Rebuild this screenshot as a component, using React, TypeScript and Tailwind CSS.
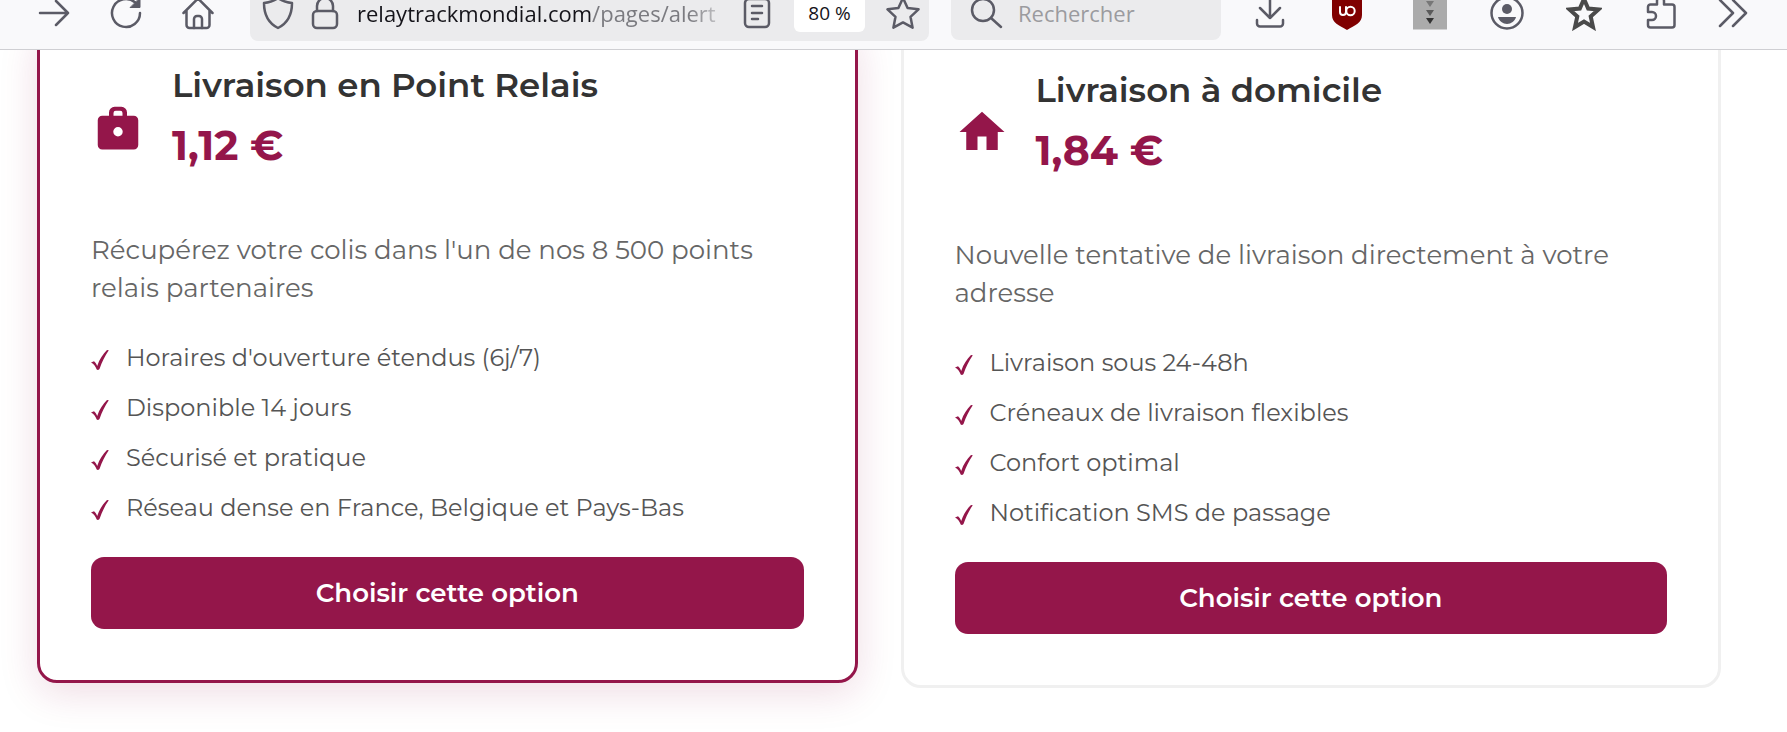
import type { ReactNode } from 'react';

interface DeliveryOption {
    id: string;
    title: string;
    price: string;
    description: string;
    features: string[];
    icon: ReactNode;
    selected?: boolean;
}

const options: DeliveryOption[] = [
    {
        id: 'relais',
        title: 'Livraison en Point Relais',
        price: '1,12 €',
        description: "Récupérez votre colis dans l'un de nos 8 500 points relais partenaires",
        features: [
            "Horaires d'ouverture étendus (6j/7)",
            'Disponible 14 jours',
            'Sécurisé et pratique',
            'Réseau dense en France, Belgique et Pays-Bas',
        ],
        icon: (
            <path
                fillRule="evenodd"
                d="M5 7h3V5.500A2.500 2.500 0 0 1 10.500 3h3A2.500 2.500 0 0 1 16 5.500V7h3a2 2 0 0 1 2 2v11a2 2 0 0 1-2 2H5a2 2 0 0 1-2-2V9a2 2 0 0 1 2-2zM10 7h4V5.800a1 1 0 0 0-1-1h-2a1 1 0 0 0-1 1zM12 12a2.100 2.100 0 1 0 0 4.200 2.100 2.100 0 0 0 0-4.200z"
            />
        ),
        selected: true,
    },
    {
        id: 'domicile',
        title: 'Livraison à domicile',
        price: '1,84 €',
        description: 'Nouvelle tentative de livraison directement à votre adresse',
        features: [
            'Livraison sous 24-48h',
            'Créneaux de livraison flexibles',
            'Confort optimal',
            'Notification SMS de passage',
        ],
        icon: <path d="M10 20v-6h4v6h5v-8h3L12 3 2 12h3v8z" />,
    },
];

function ToolIcon({ children }: { children: ReactNode }) {
    return (
        <svg
            viewBox="0 0 36 36"
            className="h-9 w-9 shrink-0"
            fill="none"
            stroke="currentColor"
            strokeWidth="2.500"
            strokeLinecap="round"
            strokeLinejoin="round"
            aria-hidden="true"
        >
            {children}
        </svg>
    );
}

function BrowserBar() {
    return (
        <header className="h-[50px] overflow-hidden border-b border-[#cfcfd3] bg-[#f9f9fb] font-['Segoe_UI','Open_Sans',sans-serif] text-[#5b5b66]">
            <div className="-mt-[15px] flex h-14 items-center pl-9 pr-[41px]">
                <nav className="flex gap-9">
                    <button aria-label="Suivant">
                        <ToolIcon>
                            <path d="M4 18h28M20 6l12 12-12 12" />
                        </ToolIcon>
                    </button>
                    <button aria-label="Actualiser">
                        <ToolIcon>
                            <path d="M32 18a14 14 0 1 1-5-10.700" />
                            <path d="M32 3v9.500h-9.500z" fill="currentColor" strokeWidth="1" />
                        </ToolIcon>
                    </button>
                    <button aria-label="Accueil">
                        <ToolIcon>
                            <path d="M3.500 18L18 3.500 32.500 18M6.500 15.500V30a3 3 0 0 0 3 3h17a3 3 0 0 0 3-3V15.500" />
                            <path d="M14 33v-9a3 3 0 0 1 3-3h2a3 3 0 0 1 3 3v9" />
                        </ToolIcon>
                    </button>
                </nav>
                <div className="ml-[34px] flex h-full min-w-0 flex-1 items-center rounded-lg bg-[#ebebed] pl-[10px] pr-2">
                    <ToolIcon>
                        <path d="M18 3c4 3 9 4.500 14 5 0 12-4 20-14 25C8 28 4 20 4 8c5-.5 10-2 14-5z" />
                    </ToolIcon>
                    <span className="ml-[11px]">
                        <ToolIcon>
                            <rect x="6" y="16" width="24" height="17" rx="4" />
                            <path d="M10 16v-5a8 8 0 0 1 16 0v5" />
                        </ToolIcon>
                    </span>
                    <div className="ml-[14px] min-w-0 flex-1 whitespace-nowrap py-1 text-[22px] leading-6 text-[#15141a] [mask-image:linear-gradient(to_right,black_88%,transparent)]">
                        relaytrackmondial.com<span className="text-[#7b7b80]">/pages/alert</span>
                    </div>
                    <button aria-label="Mode lecture" className="ml-[6px]">
                        <ToolIcon>
                            <rect x="5" y="4" width="24" height="28" rx="4" />
                            <path d="M12 11h10M12 18h10M12 24h6" />
                        </ToolIcon>
                    </button>
                    <button className="ml-[18px] h-[38px] w-[71px] rounded-md bg-white text-[19px] leading-6 text-[#15141a]">80 %</button>
                    <button aria-label="Ajouter aux favoris" className="ml-5">
                        <ToolIcon>
                            <path d="M18 3l4.600 10 10.900 1.300-8 7.500 2.100 10.900L18 27.400l-9.600 5.300 2.100-10.900-8-7.500L13.400 13z" />
                        </ToolIcon>
                    </button>
                </div>
                <label className="ml-[22px] mr-[31px] flex h-[54px] w-[270px] items-center rounded-lg bg-[#ebebed] pl-[17px]">
                    <ToolIcon>
                        <circle cx="15" cy="15" r="11" />
                        <path d="M23 23l10 9" />
                    </ToolIcon>
                    <input
                        type="search"
                        aria-label="Rechercher"
                        placeholder="Rechercher"
                        className="ml-[14px] w-full min-w-0 bg-transparent text-[22px] outline-none placeholder:text-[#9b9b9f]"
                    />
                </label>
                <nav className="flex items-center gap-[41px]">
                    <button aria-label="Téléchargements">
                        <ToolIcon>
                            <path d="M18 3v20M8 13l10 10 10-10M5 25v3.500a3 3 0 0 0 3 3h20a3 3 0 0 0 3-3V25" />
                        </ToolIcon>
                    </button>
                    <button aria-label="uBlock Origin">
                        <ToolIcon>
                            <path d="M18 1c5 3 9 4 15 4v15c0 8-7 10-15 15C10 30 3 28 3 20V5c6 0 10-1 15-4z" fill="#800000" stroke="none" />
                            <path d="M11 12v5a3 3 0 0 0 6 0v-5v5" stroke="#fff" strokeWidth="2" />
                            <circle cx="21.500" cy="16" r="4.200" stroke="#fff" strokeWidth="2" />
                        </ToolIcon>
                    </button>
                    <button aria-label="Extension" className="flex w-[42px] justify-end">
                        <ToolIcon>
                            <path d="M1 1h34v33.500H1z" fill="#ababab" stroke="none" />
                            <path d="M14 6h8l-4 6z" fill="#777" stroke="none" />
                            <path d="M14 15h8l-4 6z" fill="#5a5a5a" stroke="none" />
                            <path d="M14 23h8l-4 6z" fill="#333" stroke="none" />
                        </ToolIcon>
                    </button>
                    <button aria-label="Compte">
                        <ToolIcon>
                            <circle cx="18" cy="18" r="15.500" />
                            <circle cx="18" cy="14" r="5" fill="currentColor" stroke="none" />
                            <path d="M9 22h18c-1 4-5 7-9 7s-8-3-9-7z" fill="currentColor" stroke="none" />
                        </ToolIcon>
                    </button>
                    <button aria-label="Favoris" className="text-[#4a4a4a]">
                        <ToolIcon>
                            <path d="M18 4l4.200 9.500 10.300 1-7.800 7 2.300 10.500-9-5.500L9 32l2.300-10.500-7.800-7 10.300-1z" strokeWidth="4" strokeLinejoin="miter" />
                        </ToolIcon>
                    </button>
                    <button aria-label="Extensions">
                        <ToolIcon>
                            <path d="M5 17v-5a2.500 2.500 0 0 1 2.500-2.500H14V6a3.500 3.500 0 0 1 7 0v3.500h8a2.500 2.500 0 0 1 2.500 2.500v18a2.500 2.500 0 0 1-2.500 2.500H7.500A2.500 2.500 0 0 1 5 30v-5h4a4 4 0 0 0 0-8z" />
                        </ToolIcon>
                    </button>
                    <button aria-label="Plus d'outils" className="flex w-[26px] justify-center">
                        <ToolIcon>
                            <path d="M5 5l13 13L5 31M18 5l13 13-13 13" />
                        </ToolIcon>
                    </button>
                </nav>
            </div>
        </header>
    );
}

function OptionCard({ option }: { option: DeliveryOption }) {
    return (
        <article
            className={`min-w-0 flex-1 rounded-[20px] border-[3px] bg-white px-[51px] pb-[51px] pt-[31px] ${
                option.selected
                    ? '-mt-[25px] border-[#94164a] shadow-[0_10px_38px_rgba(148,22,74,0.15)]'
                    : '-mt-5 border-[#f0f0f0]'
            }`}
        >
            <div className="flex items-center gap-[27px]">
                <svg viewBox="0 0 24 24" className="h-[54px] w-[54px] shrink-0" fill="#94164a" aria-hidden="true">
                    {option.icon}
                </svg>
                <div className="pb-4">
                    <h3 className="text-[34px] font-semibold leading-[52px] text-[#333]">{option.title}</h3>
                    <p className="text-[41px] font-bold leading-[68px] text-[#94164a]">{option.price}</p>
                </div>
            </div>
            <p className="mt-9 text-[26px] leading-[38px] text-[#666]">{option.description}</p>
            <ul className="mt-[26px] text-[24px] text-[#555]">
                {option.features.map((feature) => (
                    <li key={feature} className="flex h-[50px] items-center">
                        <svg viewBox="0 0 18 20" className="mr-[17px] mt-1 h-5 w-[18px] shrink-0" fill="#94164a" aria-hidden="true">
                            <path d="M0 12.500l3-1.200c1.500 1.200 2.300 2.700 3.200 4.700C8.500 9 12 4 16 0l1.800.3C14 5.500 11 12 8.500 19c-1 1.200-2 1.200-2.800.5C4.700 16.700 3 14 0 12.500z" />
                        </svg>
                        {feature}
                    </li>
                ))}
            </ul>
            <button className="mt-6 h-[72px] w-full rounded-[13px] bg-[#94164a] text-[26px] font-semibold text-white">
                Choisir cette option
            </button>
        </article>
    );
}

export default function App() {
    return (
        <div className="min-h-screen bg-white">
            <BrowserBar />
            <main className="flex items-start gap-[43px] overflow-hidden pb-11 pl-[37px] pr-[66px] font-['Montserrat','Inter',sans-serif]">
                {options.map((option) => (
                    <OptionCard key={option.id} option={option} />
                ))}
            </main>
        </div>
    );
}
